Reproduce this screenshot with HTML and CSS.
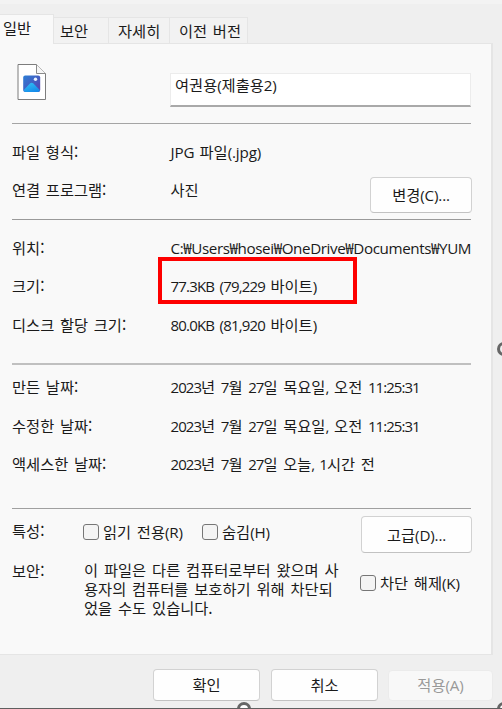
FILE: index.html
```html
<!DOCTYPE html>
<html lang="ko">
<head>
<meta charset="utf-8">
<title>속성</title>
<link rel="stylesheet" href="styles.css">
</head>
<body>
<main class="dialog">
  <nav class="tabs">
    <div class="tab active">일반</div>
    <div class="tab security">보안</div>
    <div class="tab details">자세히</div>
    <div class="tab versions">이전 버전</div>
  </nav>
  <div class="panel">
    <header class="file">
      <svg class="file-icon" width="30" height="38" viewBox="0 0 30 38">
        <defs>
          <linearGradient id="sky" x1="0" y1="0" x2="1" y2="1"><stop offset="0" stop-color="#2b7fd6"/><stop offset="1" stop-color="#5b3fae"/></linearGradient>
          <linearGradient id="hill" x1="0" y1="0" x2="0.6" y2="1"><stop offset="0" stop-color="#35c5f5"/><stop offset="1" stop-color="#168cea"/></linearGradient>
        </defs>
        <path d="M1 1.500H19.500L28.500 10.500V36.500H1Z" fill="#fff" stroke="#7d7d7d"/>
        <path d="M19.500 1.500V10.500H28.500" fill="#f6f6f6" stroke="#8a8a8a"/>
        <rect x="6.200" y="12.500" width="17" height="16.500" rx="2" fill="url(#sky)"/>
        <path d="M6.500 27.200L13.200 20.300Q14.700 19 16.200 20.300L23 27.200Q22.500 29 21 29H8.500Q7 29 6.500 27.200Z" fill="url(#hill)"/>
        <circle cx="18.500" cy="16.300" r="1.700" fill="#e9f3ff"/>
      </svg>
      <div class="name-input">여권용<span class="lt">(</span>제출용<span class="lt">2)</span></div>
    </header>
    <section class="group type">
      <div class="row"><span class="label">파일 형식:</span><span class="value"><span class="lt">JPG </span>파일<span class="lt">(.jpg)</span></span></div>
      <div class="row"><span class="label">연결 프로그램:</span><span class="value">사진</span><span class="button change"><span>변경<span class="lt">(C)...</span></span></span></div>
    </section>
    <section class="group size">
      <div class="row"><span class="label">위치:</span><span class="value path lt">C:₩Users₩hosei₩OneDrive₩Documents₩YUM</span></div>
      <div class="row marked"><span class="label">크기:</span><span class="value"><span class="lt num bytes">77.3KB (79,229 </span>바이트<span class="lt">)</span></span><i class="highlight"></i></div>
      <div class="row"><span class="label">디스크 할당 크기:</span><span class="value"><span class="lt num bytes">80.0KB (81,920 </span>바이트<span class="lt">)</span></span></div>
    </section>
    <section class="group dates">
      <div class="row"><span class="label">만든 날짜:</span><span class="value"><span class="lt num">2023</span>년 <span class="lt num">7</span>월 <span class="lt num">27</span>일 목요일<span class="lt num">,</span> 오전 <span class="lt num">11:25:31</span></span></div>
      <div class="row"><span class="label">수정한 날짜:</span><span class="value"><span class="lt num">2023</span>년 <span class="lt num">7</span>월 <span class="lt num">27</span>일 목요일<span class="lt num">,</span> 오전 <span class="lt num">11:25:31</span></span></div>
      <div class="row"><span class="label">액세스한 날짜:</span><span class="value"><span class="lt num">2023</span>년 <span class="lt num">7</span>월 <span class="lt num">27</span>일 오늘<span class="lt num">, 1</span>시간 전</span></div>
    </section>
    <section class="group attributes">
      <div class="attr-row">
        <span class="attr-label first">특성:</span>
        <span class="check readonly"><i class="box"></i><span>읽기 전용<span class="lt">(R)</span></span></span>
        <span class="check"><i class="box"></i><span>숨김<span class="lt">(H)</span></span></span>
        <span class="button advanced"><span>고급<span class="lt">(D)...</span></span></span>
      </div>
      <div class="safety-row">
        <span class="attr-label">보안:</span>
        <p class="notice">이 파일은 다른 컴퓨터로부터 왔으며 사<br>용자의 컴퓨터를 보호하기 위해 차단되<br>었을 수도 있습니다.</p>
        <span class="check unblock"><i class="box"></i><span>차단 해제<span class="lt">(K)</span></span></span>
      </div>
    </section>
  </div>
  <footer class="actions">
    <span class="button">확인</span>
    <span class="button">취소</span>
    <span class="button disabled"><span>적용<span class="lt">(A)</span></span></span>
  </footer>
  <i class="handle bottom"></i>
  <i class="handle side"></i>
  <i class="handle corner"></i>
</main>
</body>
</html>
```
FILE: styles.css
```css
* { box-sizing: border-box; }
body {
  margin: 0;
  font-family: "Noto Sans CJK KR", sans-serif;
  font-size: 15.3px;
  line-height: 20px;
  word-spacing: 1.4px;
  color: #1a1a1a;
  white-space: nowrap;
}
i { display: block; }
.lt {
  font-family: "Open Sans", "Noto Sans CJK KR", sans-serif;
  font-size: 15.2px;
  line-height: 1;
  letter-spacing: -0.15px;
}
.num { font-size: 15px; letter-spacing: -0.95px; word-spacing: 2px; }
.bytes { letter-spacing: -0.8px; word-spacing: 2.2px; }
.dialog {
  position: relative;
  width: 502px;
  height: 709px;
  overflow: hidden;
  background: #efefef;
  border-top: 4px solid #f3f3f3;
  border-bottom: 1px solid #5f5f5f;
}
.tabs { display: flex; align-items: flex-end; height: 39px; padding-top: 10px; }
.tab {
  height: 26px;
  padding: 2px 0 0 6px;
  background: #f2f2f2;
  border: 1px solid #e5e5e5;
  border-width: 1px 1px 0 0;
}
.tab.active {
  position: relative;
  width: 54px;
  height: 30px;
  margin-bottom: -1px;
  padding: 2px 0 0 3px;
  background: #f9f9f9;
}
.security { width: 55px; }
.details { width: 61px; padding-left: 9px; }
.versions { width: 78px; padding-left: 9px; }
.panel {
  width: 493px;
  height: 612px;
  background: #f9f9f9;
  border: 1px solid #e5e5e5;
  border-width: 1px 2px 1px 0;
}
.file {
  display: flex;
  height: 80px;
  margin: 0 20px 0 12px;
  padding: 19px 0 0 5px;
  border-bottom: 1px solid #a5a5a5;
}
.name-input {
  width: 301px;
  height: 34px;
  margin: 10px 0 0 123px;
  padding: 0 4px;
  background: #fff;
  border: 1px solid #ececec;
  border-bottom: 2px solid #a9a9a9;
}
.group { margin: 0 20px 0 12px; }
.type { height: 96px; padding-top: 8px; border-bottom: 1px solid #9a9a9a; }
.size { height: 145px; padding-top: 8px; border-bottom: 2px solid #c0c0c0; }
.dates { height: 144px; padding-top: 2px; border-bottom: 1px solid #a0a0a0; }
.row { display: flex; align-items: center; height: 38.5px; }
.type .row { height: 38px; }
.label { width: 158.5px; flex: none; }
.value { flex: none; }
.marked { position: relative; }
.marked .label, .marked .value { margin-top: -1px; }
.highlight {
  position: absolute;
  left: 146px;
  top: -9.500px;
  width: 199px;
  height: 47px;
  border: 4px solid #fe0000;
}
.path { line-height: 20px; letter-spacing: -0.4px; padding-top: 1px; }
.button {
  display: flex;
  flex: none;
  align-items: center;
  justify-content: center;
  width: 107px;
  height: 32px;
  padding-bottom: 2px;
  background: #fefefe;
  border: 1px solid #d2d2d2;
  border-bottom-color: #c2c2c2;
  border-radius: 4px;
}
.change { width: 102px; height: 36px; margin: 11px -1px 0 auto; }
.attr-row { display: flex; align-items: center; height: 46px; }
.attr-label { width: 71px; flex: none; }
.first { padding-bottom: 4px; }
.check { display: flex; align-items: center; gap: 4px; }
.check > span { margin-top: -2px; }
.box { width: 16px; height: 16px; background: #f4f4f4; border: 1px solid #767676; border-radius: 3px; }
.readonly { width: 119px; }
.advanced { width: 111px; height: 37px; margin: 5px -1px 0 auto; }
.safety-row { display: flex; padding-top: 5px; }
.notice { width: 277px; margin: 0; padding-left: 1px; line-height: 19.2px; word-spacing: 1.6px; }
.unblock { height: 16px; margin-top: 15px; }
.actions { display: flex; align-items: center; gap: 11px; padding: 14px 0 0 153px; }
.actions .disabled { width: 105px; height: 31px; margin-left: -1px; color: #999; background: #f8f8f8; border-color: #ebebeb; }
.handle {
  position: absolute;
  width: 14px;
  height: 14px;
  background: #fff;
  border: 3px solid #666;
  border-radius: 50%;
}
.bottom { left: 237px; top: 698px; }
.side { left: 497px; top: 338px; background: #f0f0f0; }
.corner { left: 497px; top: 698px; }
```
